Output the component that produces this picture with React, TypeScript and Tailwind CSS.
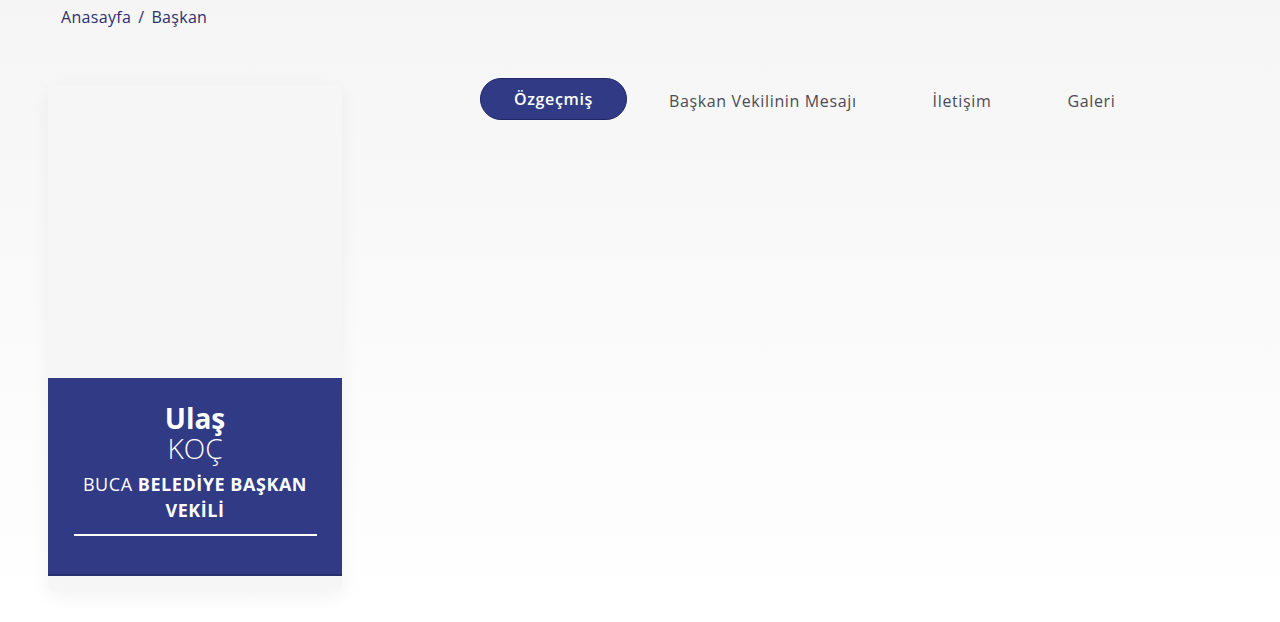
export default function App() {
  const tabs = ["Özgeçmiş", "Başkan Vekilinin Mesajı", "İletişim", "Galeri"];
  const active = 0;

  return (
    <div
      className="min-h-[622px] w-full bg-gradient-to-b from-[#f5f5f6] to-[#ffffff] text-[#2e3070]"
      style={{ fontFamily: '"Open Sans", "Noto Sans", sans-serif' }}
    >
      <div className="px-[61px] pt-[5px]">
        <nav className="flex items-center gap-[7px] text-[16px] tracking-[0.02em] text-[#2c2f6e]" aria-label="breadcrumb">
          <span>Anasayfa</span>
          <span>/</span>
          <span>Başkan</span>
        </nav>
      </div>

      <div className="flex pl-[48px] pt-[56px]">
        <aside className="flex h-[505px] w-[294px] flex-col justify-end overflow-hidden rounded-[6px] bg-[#f6f6f7] pb-[14px] shadow-[0_6px_18px_rgba(0,0,0,0.05)]">
          <div className="flex h-[198px] flex-col items-center border-b-2 border-[#27306f] bg-[#313a84] px-4 pt-[25px] text-center text-white">
            <h2 className="text-[28px] leading-[30px]">
              <span className="font-bold">Ulaş</span>
              <br />
              <span className="font-light">KOÇ</span>
            </h2>
            <div className="mt-[8px] text-[18px] leading-[26px] tracking-[0.03em]">
              BUCA <span className="font-bold">BELEDİYE BAŞKAN VEKİLİ</span>
            </div>
            <div className="mt-[11px] h-[1.5px] w-[243px] bg-white" />
          </div>
        </aside>

        <div className="ml-[138px] -mt-[7px] flex h-[42px] items-center gap-2">
          {tabs.map((t, i) => (
            <button
              key={t}
              type="button"
              className={
                i === active
                  ? "flex h-[42px] items-center rounded-full border border-[#1f2766] bg-[#313a84] px-[33px] text-[16px] font-semibold tracking-[0.04em] text-white"
                  : "flex h-[42px] items-center rounded-full px-[34px] pt-[3px] text-[16px] font-medium tracking-[0.04em] text-[#4b4b55]"
              }
            >
              {t}
            </button>
          ))}
        </div>
      </div>
    </div>
  );
}
